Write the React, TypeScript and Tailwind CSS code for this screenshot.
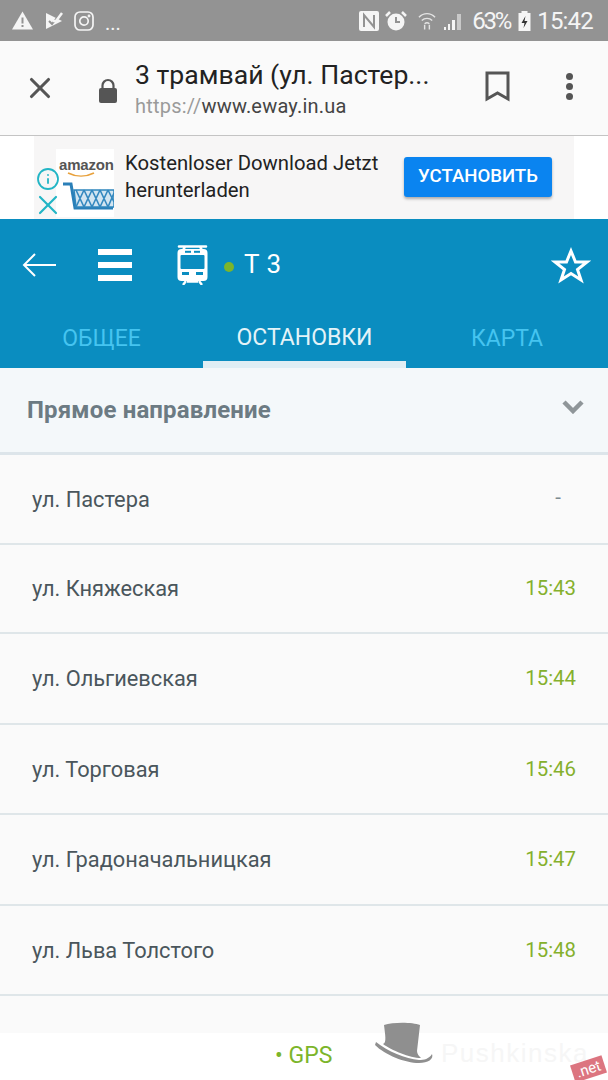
import { Info, X } from "lucide-react";

const stops = [
  { name: "ул. Пастера", time: "-", height: "h-[90px]" },
  { name: "ул. Княжеская", time: "15:43", height: "h-[89px]" },
  { name: "ул. Ольгиевская", time: "15:44", height: "h-[91px]" },
  { name: "ул. Торговая", time: "15:46", height: "h-[90px]" },
  { name: "ул. Градоначальницкая", time: "15:47", height: "h-[91px]" },
  { name: "ул. Льва Толстого", time: "15:48", height: "h-[90px]" },
  { name: "ул. Пантелеймоновская", time: "15:50", height: "h-[92px]" },
];

function TramIcon() {
  const blue = "#0a8dc0";
  return (
    <svg width="31" height="41" viewBox="0 0 31 41">
      <path d="M2 2.500h27M8 2.500l-2 4M23 2.500l2 4" stroke="white" strokeWidth="2.600" strokeLinecap="round" fill="none" />
      <rect x="0.500" y="5" width="30" height="32" rx="4" fill="white" />
      <rect x="8" y="6.800" width="6" height="2" fill={blue} />
      <rect x="17" y="6.800" width="6" height="2" fill={blue} />
      <rect x="3.500" y="11" width="24" height="14" rx="1" fill={blue} />
      <rect x="5" y="28" width="7" height="3" fill={blue} />
      <rect x="19" y="28" width="7" height="3" fill={blue} />
      <path d="M9 37l-3 4M22 37l3 4M10 37.500h11" stroke="white" strokeWidth="2.400" fill="none" />
    </svg>
  );
}

function StatusBar() {
  return (
    <div className="h-[41px] bg-[#939393] flex items-center justify-between pl-3 pr-[15px] text-[#f5f5f5]">
      <div className="flex items-center">
        <svg width="21" height="19" viewBox="0 0 21 19">
          <path d="M10.500 0.500L21 18.500H0z" fill="#f5f5f5" />
          <path d="M9.500 6.500h2v6h-2zM9.500 14h2v2h-2z" fill="#939393" />
        </svg>
        <svg className="ml-[12px]" width="18" height="18" viewBox="0 0 18 18">
          <path d="M1 1l16 8-16 8z" fill="#f5f5f5" />
          <path d="M4 9l3 3 8-10" stroke="#939393" strokeWidth="2" fill="none" />
          <path d="M8 9l3 0 6-8" stroke="#f5f5f5" strokeWidth="2.500" fill="none" />
        </svg>
        <svg className="ml-[11px]" width="20" height="20" viewBox="0 0 20 20" fill="none" stroke="#f5f5f5" strokeWidth="1.700">
          <rect x="1" y="1" width="18" height="18" rx="5" />
          <circle cx="10" cy="10" r="4.200" />
          <circle cx="15" cy="5" r="0.600" />
        </svg>
        <span className="ml-[11px] text-[20px] leading-none font-['Roboto',sans-serif] mt-1">...</span>
      </div>
      <div className="flex items-center font-['Roboto',sans-serif]">
        <svg width="20" height="20" viewBox="0 0 20 20">
          <rect width="20" height="20" rx="2" fill="#f5f5f5" />
          <path d="M5 16V4l10 12V4" stroke="#939393" strokeWidth="2" fill="none" />
        </svg>
        <svg className="ml-[6px]" width="22" height="22" viewBox="0 0 22 22">
          <circle cx="11" cy="12" r="8.500" fill="#f5f5f5" />
          <path d="M1 6l4-4M21 6l-4-4" stroke="#f5f5f5" strokeWidth="2.500" />
          <path d="M11 7v5h4" stroke="#939393" strokeWidth="2" fill="none" />
        </svg>
        <svg className="ml-[11px]" width="18" height="20" viewBox="0 0 19 20" fill="none" stroke="#e4e4e4" strokeWidth="1.500">
          <path d="M1 6c5-5 12-5 17 0M4 9.500c3-3 8-3 11 0M7 13c1.500-1.500 3.500-1.500 5 0" />
          <path d="M7 19v-5M12 19v-5" />
        </svg>
        <svg className="ml-[7px]" width="20" height="20" viewBox="0 0 20 20" fill="#f5f5f5">
          <path d="M1 16h2v3H1zM5 13h2v6H5zM9 9h3v10H9z" />
          <path d="M14 3h4v16h-4z" opacity="0.550" />
        </svg>
        <span className="ml-[9px] text-[24px] leading-none tracking-[-2.2px]">63%</span>
        <svg className="ml-[8px]" width="13" height="21" viewBox="0 0 12 21">
          <path d="M3 1h6v2h3v18H0V3h3z" fill="#f5f5f5" />
          <path d="M7 6l-4 7h3l-1 5 4-7H6z" fill="#333" />
        </svg>
        <span className="ml-[6px] text-[24px] leading-none tracking-[-0.8px]">15:42</span>
      </div>
    </div>
  );
}

function BrowserBar() {
  return (
    <div className="h-[95px] bg-[#fafafa] border-b border-[#c4c4c4] flex items-center font-['Roboto',sans-serif]">
      <X className="ml-[23px] w-[34px] h-[34px] text-[#555555]" strokeWidth={2.2} />
      <svg className="ml-[42px] mt-1" width="18" height="25" viewBox="0 0 18 25">
        <path d="M3.500 12V7.500a5.500 5.500 0 0 1 11 0V12" stroke="#555555" strokeWidth="2.200" fill="none" />
        <rect y="10" width="18" height="15" rx="2" fill="#555555" />
      </svg>
      <div className="ml-[18px] flex-1 min-w-0">
        <div className="text-[26.6px] leading-[32px] mt-[1px] text-[#222222] whitespace-nowrap">3 трамвай (ул. Пастер...</div>
        <div className="text-[20px] leading-[26px] mt-[2px] text-[#444444] tracking-[0.2px]">
          <span className="text-[#9a9a9a]">https://</span>www.eway.in.ua
        </div>
      </div>
      <svg className="mr-[56px] -mt-[3px]" width="25" height="31" viewBox="0 0 25 31" fill="none" stroke="#555555" strokeWidth="3">
        <path d="M2 2h21v26l-10.500-6L2 28z" />
      </svg>
      <div className="mr-[35px] -mt-[3px] flex flex-col gap-[3px]">
        <div className="w-[7px] h-[7px] rounded-full bg-[#555555]" />
        <div className="w-[7px] h-[7px] rounded-full bg-[#555555]" />
        <div className="w-[7px] h-[7px] rounded-full bg-[#555555]" />
      </div>
    </div>
  );
}

function AdBanner() {
  return (
    <div className="h-[83px] bg-white px-[34px] font-['Roboto',sans-serif]">
      <div className="h-full bg-[#f7f6f6] flex items-start relative">
        <div className="ml-[22px] mt-[13px] w-[58px] h-[68px] bg-white relative overflow-hidden shrink-0">
          <div className="absolute left-[3px] top-[6px] text-[15px] leading-[20px] font-bold text-[#555555] font-['Liberation_Sans',sans-serif] tracking-[-0.2px]">amazon</div>
          <svg className="absolute left-0 top-0" width="58" height="68" viewBox="0 0 58 68" fill="none">
            <path d="M12 24c8 4 18 4 26 0" stroke="#e8a13c" strokeWidth="1.600" />
            <path d="M7 35h8l4 24h38" stroke="#2a7fb8" strokeWidth="3" />
            <path d="M18 41h40v17H20z" fill="#d3e5f1" stroke="#2f86bd" strokeWidth="1.500" />
            <path d="M20 41l8 17M28 41l8 17M36 41l8 17M44 41l8 17M52 41l6 12M28 41l-8 17M36 41l-8 17M44 41l-8 17M52 41l-8 17M58 44l-6 14" stroke="#3488bf" strokeWidth="1.600" />
          </svg>
        </div>
        <Info className="absolute left-[2px] top-[31px] w-[24px] h-[24px] text-[#22b5c5]" strokeWidth={1.8} />
        <X className="absolute -left-[2px] top-[53px] w-[32px] h-[32px] text-[#22b5c5]" strokeWidth={1.6} />
        <div className="ml-[11px] mt-[14px] text-[20.3px] leading-[27px] text-[#222222] w-[270px] shrink-0">
          Kostenloser Download Jetzt herunterladen
        </div>
        <div className="absolute left-[370px] top-[21px] w-[148px] h-[40px] rounded-[3px] bg-[#0a84f0] shadow-[0_2px_3px_rgba(0,0,0,0.3)] flex items-center justify-center text-white text-[18.6px] font-medium">
          УСТАНОВИТЬ
        </div>
      </div>
    </div>
  );
}

function Header() {
  return (
    <div className="h-[149px] bg-[#0a8dc0] font-['Roboto',sans-serif]">
      <div className="h-[91px] flex items-center">
        <svg className="ml-[22px]" width="34" height="26" viewBox="0 0 34 26" fill="none" stroke="white" strokeWidth="2">
          <path d="M34 13H2M13 2L2 13l11 11" />
        </svg>
        <div className="ml-[42px] w-[34px] flex flex-col gap-[7px]">
          <div className="h-[6px] bg-white" />
          <div className="h-[6px] bg-white" />
          <div className="h-[6px] bg-white" />
        </div>
        <div className="ml-[45px]">
          <TramIcon />
        </div>
        <div className="ml-[16px] mt-[4px] w-[10px] h-[10px] rounded-full bg-[#7cb52a]" />
        <span className="ml-[10px] text-[26px] text-white tracking-[0.5px]">Т 3</span>
        <svg className="ml-auto mr-[17px]" width="40" height="38" viewBox="0 0 40 38" fill="none" stroke="white" strokeWidth="3">
          <path d="M20 5l4.500 11H36l-9.500 7.500L30 34l-10-6.500L10 34l3.500-10.500L4 16h11.500z" />
        </svg>
      </div>
      <div className="h-[58px] flex text-[23px]">
        <div className="w-[203px] flex items-center justify-center text-[#45c4f0]">ОБЩЕЕ</div>
        <div className="w-[203px] flex items-center justify-center pt-[5px] text-[#e4f3f8] border-b-[7px] border-[#dfeef4]">ОСТАНОВКИ</div>
        <div className="w-[202px] flex items-center justify-center text-[#45c4f0]">КАРТА</div>
      </div>
    </div>
  );
}

function StopRow({ name, time, height }: { name: string; time: string; height: string }) {
  return (
    <div className={`${height} border-b-2 border-[#dfe6e9] flex items-center justify-between px-[32px] shrink-0`}>
      <span className="text-[21.8px] text-[#4a565c] pt-[2px]">{name}</span>
      <span className={`text-[20.4px] ${time === "-" ? "text-[#7c8a90] pr-[15px] pb-1" : "text-[#85b02c]"}`}>{time}</span>
    </div>
  );
}

function App() {
  return (
    <div className="w-[608px] h-[1080px] overflow-hidden relative bg-[#fafafa] font-['Roboto',sans-serif]">
      <StatusBar />
      <BrowserBar />
      <AdBanner />
      <Header />
      <div className="h-[87px] bg-[#f4f8fa] border-b-[3px] border-[#dde5ea] flex items-center justify-between pl-[27px] pr-[24px]">
        <span className="text-[24px] font-bold text-[#6c7b83] tracking-[0.15px]">Прямое направление</span>
        <svg className="-mt-[6px]" width="22" height="14" viewBox="0 0 22 14" fill="none" stroke="#8f9699" strokeWidth="4.500">
          <path d="M2 2l9 9 9-9" />
        </svg>
      </div>
      {stops.map((stop) => (
        <StopRow key={stop.name} {...stop} />
      ))}

      {/* bottom strip over the list */}
      <div className="absolute left-0 right-0 top-[1033px] h-[47px] bg-white flex items-center">
        <span className="ml-[275px] text-[23px] text-[#7cb52a]">• GPS</span>
        <svg className="absolute left-[375px] -top-[11px]" width="59" height="41" viewBox="0 0 59 41">
          <path d="M9 3c9-3 28-3 36 0l-3 26c0 3 2 5 4 7-11 0-30-8-38-14 4-1 2-10 1-19z" fill="#8f8f8f" />
          <path d="M1 20c11 9 30 17 43 18 5 0 10-1 13-6 2 5-4 9-13 9C30 41 10 33 0 23z" fill="#8f8f8f" />
        </svg>
        <span className="absolute left-[441px] top-[1px] text-[26px] text-[#f6f6f6] tracking-[1.5px] font-['Liberation_Sans',sans-serif]">Pushkinska</span>
        <span className="absolute left-[572px] top-[27px] -rotate-[18deg] bg-[#dc7580] text-white text-[15px] leading-[18px] px-[4px]">.net</span>
      </div>
    </div>
  );
}

export default App;
